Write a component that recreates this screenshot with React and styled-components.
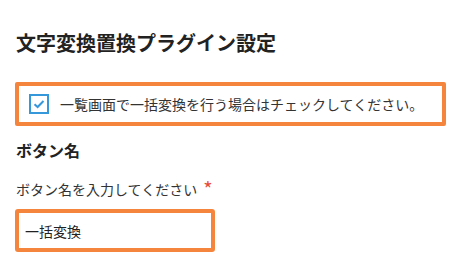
import React, { useState } from 'react';
import styled, { createGlobalStyle } from 'styled-components';

const GlobalStyle = createGlobalStyle`
body {
	margin: 0;
	background: #fff;
	font-family: "Noto Sans CJK JP", "Noto Sans", sans-serif;
	color: #333;
}
`
const Page = styled.div`
padding: 28px 13px 0 15px;
`
const Title = styled.h1`
margin: 0 0 0 1px;
font-size: 20px;
font-weight: bold;
line-height: 30px;
color: #222;
`
const Highlight = styled.div`
margin-top: 24px;
border: 4px solid #f5843c;
border-radius: 2px;
display: flex;
align-items: center;
gap: 11px;
padding: 8px 10px;
`
const CheckBox = styled.span`
box-sizing: border-box;
width: 20px;
height: 20px;
border: 2px solid #3498db;
display: flex;
align-items: center;
justify-content: center;
cursor: pointer;
`
const CheckText = styled.span`
font-size: 14px;
line-height: 20px;
color: #333;
`
const SectionTitle = styled.h2`
margin: 12px 0 0 1px;
font-size: 16px;
font-weight: bold;
line-height: 24px;
color: #222;
`
const Label = styled.div`
margin-top: 16px;
margin-left: 1px;
font-size: 14px;
line-height: 22px;
color: #333;
display: flex;
align-items: center;
`
const Required = styled.span`
color: #e74c3c;
margin-left: 6px;
font-size: 20px;
line-height: 22px;
`
const Input = styled.input`
box-sizing: border-box;
display: block;
margin-top: 9px;
width: 200px;
height: 43px;
border: 4px solid #f5843c;
border-radius: 3px;
padding: 0 6px;
font-family: inherit;
font-size: 14px;
color: #222;
outline: none;
`

export default function App() {
	const [checked, setChecked] = useState(true);
	const [name, setName] = useState('一括変換');

	return (
		<>
			<GlobalStyle />
			<Page>
				<Title>文字変換置換プラグイン設定</Title>
				<Highlight>
					<CheckBox onClick={() => setChecked(!checked)}>
						{checked && (
							<svg width="12" height="10" viewBox="0 0 12 10">
								<path d="M1.5 5.2 L4.6 8 L10.5 2" fill="none" stroke="#3498db" strokeWidth="2" />
							</svg>
						)}
					</CheckBox>
					<CheckText>一覧画面で一括変換を行う場合はチェックしてください。</CheckText>
				</Highlight>
				<SectionTitle>ボタン名</SectionTitle>
				<Label>ボタン名を入力してください<Required>*</Required></Label>
				<Input value={name} onChange={(e) => setName(e.target.value)} />
			</Page>
		</>
	)
}
